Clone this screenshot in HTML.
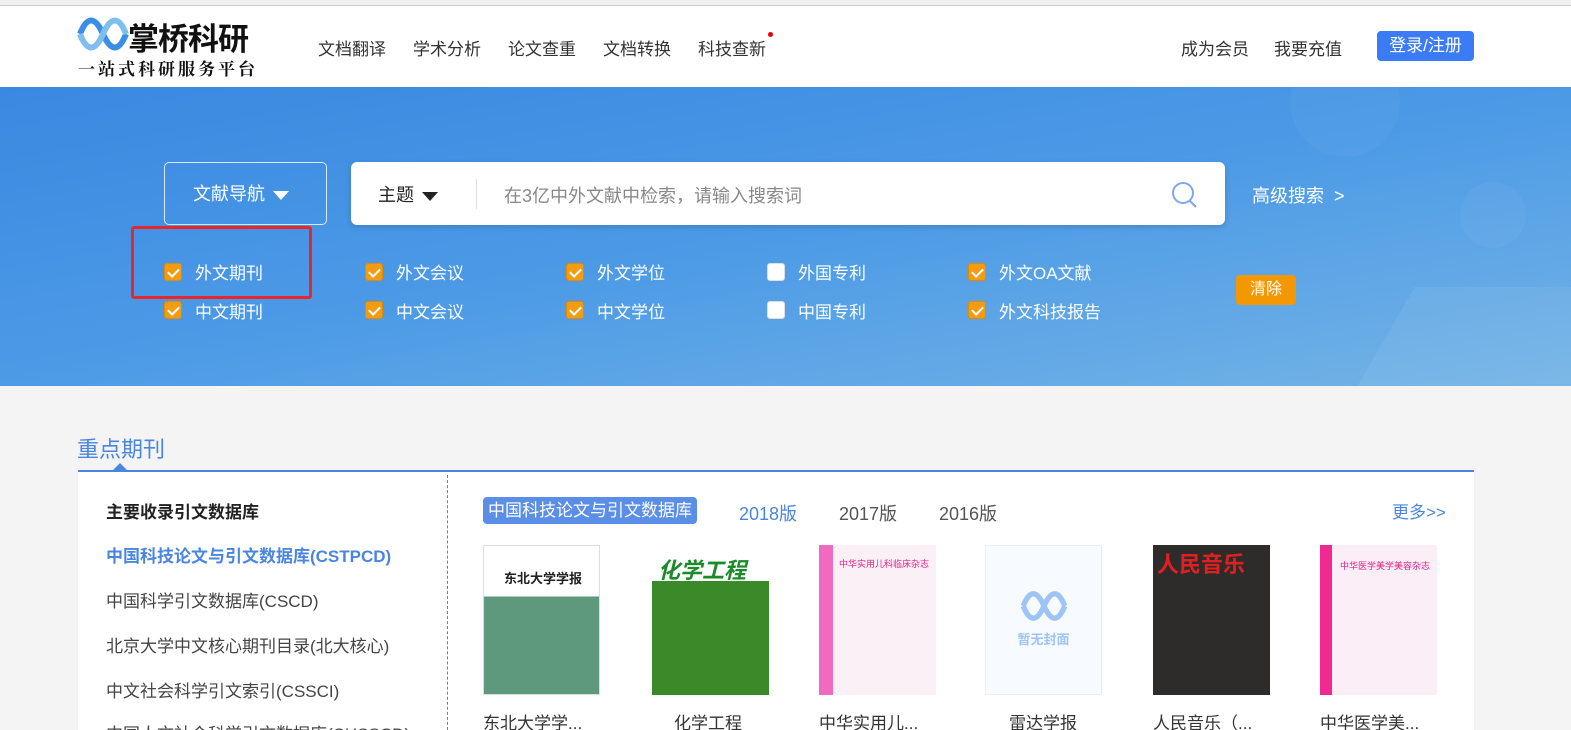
<!DOCTYPE html>
<html><head><meta charset="utf-8"><style>
*{margin:0;padding:0;box-sizing:border-box}
html,body{width:1571px;height:730px;overflow:hidden}
body{background:#f4f4f4;font-family:"Liberation Sans","Noto Sans CJK SC",sans-serif;position:relative}
.a{position:absolute;white-space:nowrap}
.top{position:absolute;left:0;top:0;width:1571px;height:87px;background:#fff;border-top:5px solid #f0f0f0;box-shadow:inset 0 1px 0 #ccc}
.nav{font-size:17px;color:#333;top:35px}
.banner{position:absolute;left:0;top:87px;width:1571px;height:299px;background:linear-gradient(170deg,#3a88e1 0%,#4c9ae6 50%,#74b4e6 100%);overflow:hidden}
.cb{position:absolute;width:18px;height:18px;border-radius:3px;background:#f39c12;border:1px solid #e08a00}
.cb::after{content:"";position:absolute;left:5px;top:2px;width:5px;height:9px;border:solid #fff;border-width:0 2px 2px 0;transform:rotate(45deg)}
.cb.off{background:#fff;border-color:#ddd}.cb.off::after{display:none}
.lbl{font-size:17px;color:#fff}
.cover{position:absolute;top:545px;width:117px;height:150px;overflow:hidden}
.t{font-size:17px;color:#333;top:709px}
.tri{display:inline-block;width:0;height:0;border-left:8px solid transparent;border-right:8px solid transparent;vertical-align:middle;margin-left:8px}
</style></head><body>
<div class="top"></div>
<svg class="a" style="left:77px;top:14px" width="52" height="40" viewBox="0 0 52 40"><path d="M3 20 C10 2,18 2,26 20 S42 38,49 20" stroke="#3a8ee6" stroke-width="6" fill="none"/><path d="M3 20 C10 38,18 38,26 20 S42 2,49 20" stroke="#7fbfee" stroke-width="6" fill="none"/></svg>
<div class="a" style="left:128px;top:14px;font-size:31px;font-weight:bold;color:#111;letter-spacing:-1px">掌桥科研</div>
<div class="a" style="left:78px;top:55px;font-size:17px;font-weight:bold;color:#111;letter-spacing:3px;font-family:'Noto Serif CJK SC',serif">一站式科研服务平台</div>
<div class="a nav" style="left:318px">文档翻译</div>
<div class="a nav" style="left:413px">学术分析</div>
<div class="a nav" style="left:508px">论文查重</div>
<div class="a nav" style="left:603px">文档转换</div>
<div class="a nav" style="left:698px">科技查新</div>
<div class="a" style="left:768px;top:32px;width:5px;height:5px;border-radius:50%;background:#e00"></div>
<div class="a nav" style="left:1181px">成为会员</div>
<div class="a nav" style="left:1274px">我要充值</div>
<div class="a" style="left:1377px;top:31px;width:97px;height:30px;background:#3b7cf6;border-radius:4px;color:#fff;font-size:17px;text-align:center;line-height:30px">登录/注册</div>
<div class="banner">
<div class="a" style="left:1290px;top:-40px;width:110px;height:110px;border-radius:50%;background:rgba(255,255,255,.03)"></div>
<div class="a" style="left:1460px;top:95px;width:66px;height:66px;border-radius:50%;background:rgba(255,255,255,.04)"></div>
<div class="a" style="left:1380px;top:200px;width:260px;height:120px;background:rgba(255,255,255,.06);transform:skewX(-30deg)"></div>
</div>
<div class="a" style="left:164px;top:162px;width:163px;height:63px;border:1px solid rgba(255,255,255,.8);border-radius:5px;color:#fff;font-size:18px;line-height:63px;padding-left:28px">文献导航<span class="tri" style="border-top:9px solid #fff"></span></div>
<div class="a" style="left:351px;top:162px;width:874px;height:63px;background:#fff;border-radius:6px;box-shadow:0 2px 6px rgba(0,0,0,.15)"></div>
<div class="a" style="left:378px;top:181px;font-size:18px;color:#222">主题<span class="tri" style="border-top:9px solid #222"></span></div>
<div class="a" style="left:476px;top:179px;width:1px;height:30px;background:#ddd"></div>
<div class="a" style="left:504px;top:182px;font-size:18px;color:#888">在3亿中外文献中检索，请输入搜索词</div>
<svg class="a" style="left:1170px;top:180px" width="30" height="30" viewBox="0 0 30 30"><circle cx="13" cy="13" r="10" stroke="#7fa8e8" stroke-width="2" fill="none"/><path d="M20 21 L26 27" stroke="#7fa8e8" stroke-width="2"/></svg>
<div class="a" style="left:1252px;top:182px;font-size:18px;color:#fff">高级搜索 &nbsp;&gt;</div>
<div class="a" style="left:131px;top:226px;width:181px;height:73px;border:3px solid #e8262a;border-radius:3px"></div>
<div class="cb" style="left:164px;top:263px"></div><div class="a lbl" style="left:195px;top:259px">外文期刊</div>
<div class="cb" style="left:365px;top:263px"></div><div class="a lbl" style="left:396px;top:259px">外文会议</div>
<div class="cb" style="left:566px;top:263px"></div><div class="a lbl" style="left:597px;top:259px">外文学位</div>
<div class="cb off" style="left:767px;top:263px"></div><div class="a lbl" style="left:798px;top:259px">外国专利</div>
<div class="cb" style="left:968px;top:263px"></div><div class="a lbl" style="left:999px;top:259px">外文OA文献</div>
<div class="cb" style="left:164px;top:301px"></div><div class="a lbl" style="left:195px;top:298px">中文期刊</div>
<div class="cb" style="left:365px;top:301px"></div><div class="a lbl" style="left:396px;top:298px">中文会议</div>
<div class="cb" style="left:566px;top:301px"></div><div class="a lbl" style="left:597px;top:298px">中文学位</div>
<div class="cb off" style="left:767px;top:301px"></div><div class="a lbl" style="left:798px;top:298px">中国专利</div>
<div class="cb" style="left:968px;top:301px"></div><div class="a lbl" style="left:999px;top:298px">外文科技报告</div>
<div class="a" style="left:1236px;top:275px;width:60px;height:30px;background:#f39800;border-radius:4px;color:#fff;font-size:16px;text-align:center;line-height:30px">清除</div>

<div class="a" style="left:77px;top:432px;font-size:22px;color:#4a86e0">重点期刊</div>
<div class="a" style="left:78px;top:470px;width:1396px;height:270px;background:#fff;border-top:2px solid #4a86e0"></div>
<div class="a" style="left:113px;top:463px;border:7px solid transparent;border-bottom-color:#4a86e0;border-top:0"></div>
<div class="a" style="left:447px;top:475px;height:260px;border-left:1px dashed #4a86e0"></div>
<div class="a" style="left:106px;top:498px;font-size:17px;font-weight:bold;color:#222">主要收录引文数据库</div>
<div class="a" style="left:106px;top:542px;font-size:17px;font-weight:bold;color:#4a86e0">中国科技论文与引文数据库(CSTPCD)</div>
<div class="a" style="left:106px;top:587px;font-size:17px;color:#444">中国科学引文数据库(CSCD)</div>
<div class="a" style="left:106px;top:632px;font-size:17px;color:#444">北京大学中文核心期刊目录(北大核心)</div>
<div class="a" style="left:106px;top:677px;font-size:17px;color:#444">中文社会科学引文索引(CSSCI)</div>
<div class="a" style="left:106px;top:720px;font-size:17px;color:#444">中国人文社会科学引文数据库(CHSSCD)</div>
<div class="a" style="left:483px;top:497px;height:27px;padding:0 5px;background:#5b8ee6;border-radius:4px;color:#fff;font-size:17px;line-height:27px">中国科技论文与引文数据库</div>
<div class="a" style="left:739px;top:500px;font-size:18px;color:#4a86e0">2018版</div>
<div class="a" style="left:839px;top:500px;font-size:18px;color:#555">2017版</div>
<div class="a" style="left:939px;top:500px;font-size:18px;color:#555">2016版</div>
<div class="a" style="left:1392px;top:498px;font-size:17px;color:#4a86e0">更多&gt;&gt;</div>

<div class="cover" style="left:483px;background:linear-gradient(#fff 0,#fff 34%,#5e987d 34%);border:1px solid #ddd"><div style="margin:22px 0 0 20px;font-size:13px;font-weight:bold;color:#222">东北大学学报</div></div>
<div class="cover" style="left:652px;background:linear-gradient(#fff 0,#fff 24%,#3b8a2a 24%)"><div style="margin:8px 0 0 6px;font-size:22px;font-weight:bold;color:#1a8a2a;font-style:italic">化学工程</div></div>
<div class="cover" style="left:819px;background:#fbf0f6;border-left:14px solid #f06ac0"><div style="margin:12px 0 0 6px;font-size:9px;color:#e0208a">中华实用儿科临床杂志</div></div>
<div class="cover" style="left:985px;background:#f7faff;border:1px solid #e6eefa"><svg style="margin:42px 0 0 30px" width="56" height="36" viewBox="0 0 52 40"><path d="M3 20 C10 2,18 2,26 20 S42 38,49 20" stroke="#9cc4f4" stroke-width="6" fill="none"/><path d="M3 20 C10 38,18 38,26 20 S42 2,49 20" stroke="#9cc4f4" stroke-width="6" fill="none"/></svg><div style="text-align:center;font-size:13px;color:#9cc4f4;font-weight:bold">暂无封面</div></div>
<div class="cover" style="left:1153px;background:#2e2c2a"><div style="margin:2px 0 0 4px;font-size:22px;font-weight:bold;color:#e02020">人民音乐</div></div>
<div class="cover" style="left:1320px;background:#fbeef6;border-left:12px solid #f02a90"><div style="margin:14px 0 0 8px;font-size:9px;color:#e0208a">中华医学美学美容杂志</div></div>
<div class="a t" style="left:483px">东北大学学...</div>
<div class="a t" style="left:674px">化学工程</div>
<div class="a t" style="left:819px">中华实用儿...</div>
<div class="a t" style="left:1009px">雷达学报</div>
<div class="a t" style="left:1153px">人民音乐（...</div>
<div class="a t" style="left:1320px">中华医学美...</div>
</body></html>
